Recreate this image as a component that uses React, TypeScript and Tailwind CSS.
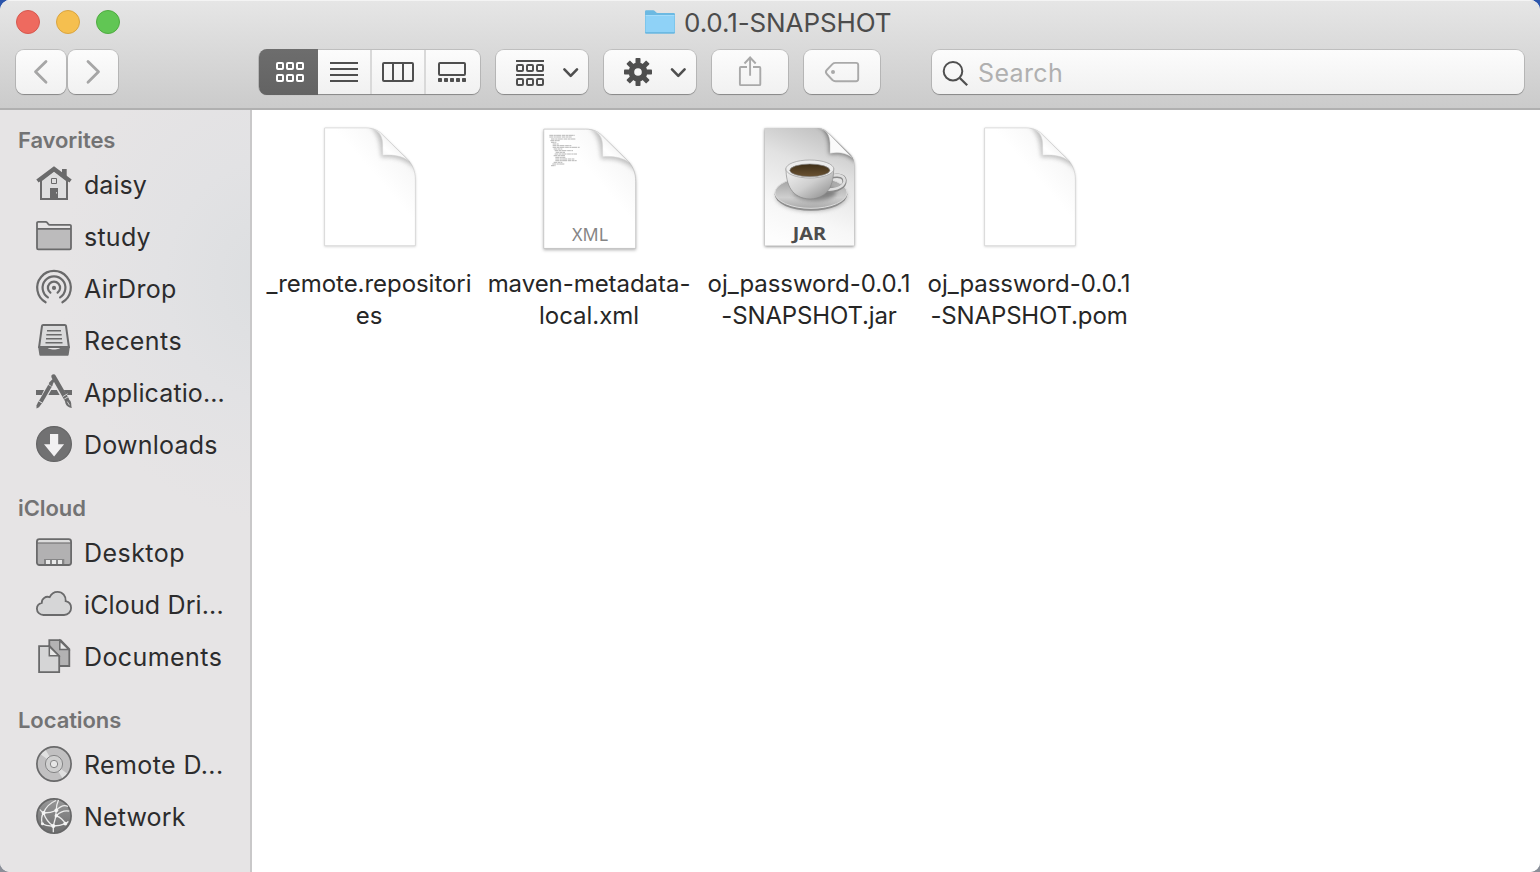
import type { ReactNode } from "react";

const STROKE = "#6a6a6b";

function SideIcon({ children }: { children: ReactNode }) {
  return (
    <svg width="36" height="36" viewBox="0 0 36 36" fill="none" className="mb-0.5 shrink-0 overflow-visible">
      {children}
    </svg>
  );
}

const HomeIcon = (
  <SideIcon>
    <path d="M5 14.5V33H31V14.5L18 4.5Z" fill="#dededf" stroke={STROKE} strokeWidth="2" />
    <path d="M26 3h4.7v9L26 8.5Z" fill={STROKE} />
    <path d="M18 .2 .3 13.6 2.6 16.400 18 5.300 33.400 16.400l2.300-2.800Z" fill={STROKE} />
    <path d="M15.500 12.500h5v5h-5z" stroke={STROKE} strokeWidth="1" />
    <path d="M14 22h8v11h-8z" fill={STROKE} />
    <path d="M20.500 26v1.600" stroke="#ddd" strokeWidth=".8" />
  </SideIcon>
);

const FolderIcon = (
  <SideIcon>
    <path d="M1 10.5h34V30a1.300 1.300 0 0 1-1.300 1.300H2.300A1.300 1.300 0 0 1 1 30Z" fill="#bcbbbc" />
    <path d="M1 30V5a1.200 1.200 0 0 1 1.200-1.200h7.300c.9 0 1.300.3 1.800 1l.9 1.300c.4.600.8.800 1.600.800h20A1.200 1.200 0 0 1 35 8.100V30a1.300 1.300 0 0 1-1.300 1.300H2.300A1.300 1.300 0 0 1 1 30ZM1 10.900h34" stroke={STROKE} strokeWidth="1.800" />
  </SideIcon>
);

const AirDropIcon = (
  <SideIcon>
    <g stroke={STROKE} strokeWidth="2.200" strokeLinecap="round">
      <path d="M9.600 32.300a16.800 16.800 0 1 1 16.800 0" />
      <path d="M11.900 27.400a11.400 11.400 0 1 1 12.200 0" />
      <path d="M14.400 22.700a6.100 6.100 0 1 1 7.200 0" />
    </g>
    <circle cx="18" cy="17.900" r="2.100" fill={STROKE} />
  </SideIcon>
);

const RecentsIcon = (
  <SideIcon>
    <path d="M7.200 2.900h21.600c.7 0 1.100.4 1.200 1l2.900 21.200H3.100L6 3.900C6.100 3.300 6.500 2.900 7.200 2.900Z" fill="#dadadb" stroke={STROKE} strokeWidth="2" />
    <path d="M11 8.700h14M10.300 12.700h15.400M10 16.700h16M9.500 20.700h17" stroke={STROKE} strokeWidth="1.600" />
    <path d="M2.600 24.200h7.900c.6 4.400 14.400 4.400 15 0h7.900l.3 1.600-1 6.600c-.1.900-.5 1.300-1.300 1.300H4.600c-.8 0-1.200-.4-1.300-1.300l-1-6.600Z" fill="#6f6f70" />
  </SideIcon>
);

const ApplicationsIcon = (
  <SideIcon>
    <path d="M0 16h8l-2.300 5H0zM15.200 16h5.600l2.800 5H12.400zM27.800 16H36v5h-5.600z" fill="#6b6b6c" />
    <path d="M15.200 9.800 4.600 28" stroke="#6b6b6c" strokeWidth="4" />
    <path d="M14.900 6.800 16.800 5l2 1.300-2.500 4.600-3.500-2z" fill="#6b6b6c" />
    <path d="m2.400 27.200 3.600 2-3 4-2.500 1.400v-3z" fill="#6b6b6c" />
    <path d="m12 10.300 3.600 2.200M2.200 26.600l4.200 2.400" stroke="#e0e0e1" strokeWidth=".8" />
    <path d="M17.600 2.600 31 26" stroke="#6b6b6c" strokeWidth="4.600" strokeLinecap="round" />
    <path d="m26.900 22.600 4.700-2.800M28.300 25l4.700-2.700" stroke="#e0e0e1" strokeWidth=".9" />
    <path d="M29.300 26.500c2-1.700 4.600-1 5.500 1.300.8 2 .2 3.800 1 6.300-2.900-.4-5.500-2-6.300-4.500-.4-1.100-.4-2.200-.2-3.100Z" fill="#6b6b6c" />
    <path d="m31.300 27.600 2.200 3.700" stroke="#d8d8d8" strokeWidth=".9" />
  </SideIcon>
);

const DownloadsIcon = (
  <SideIcon>
    <circle cx="18" cy="18" r="17.400" fill="#717172" stroke="#646465" strokeWidth="1.200" />
    <path d="M14 8h8.200v10.200h5.900L18.100 30.600 8 18.200h6Z" fill="#f2f1f2" />
  </SideIcon>
);

const DesktopIcon = (
  <SideIcon>
    <rect x=".9" y="5.200" width="34.200" height="25.800" rx="2.500" fill="#b2b1b2" />
    <path d="M1.500 5.800h33v3h-33z" fill="#dcdcdc" />
    <path d="M1 9h34" stroke={STROKE} strokeWidth="1.200" />
    <path d="M8 25h20.300v6H8z" fill="#858586" />
    <path d="M10 26h4v4.300h-4zM16 26h4v4.300h-4zM22 26h4v4.300h-4z" fill="#e9e9e9" />
    <rect x=".9" y="5.200" width="34.200" height="25.800" rx="2.500" stroke={STROKE} strokeWidth="1.800" />
  </SideIcon>
);

const CloudIcon = (
  <SideIcon>
    <path d="M7.500 29C3.800 29 .9 26.300.9 22.800c0-3 2-5.300 4.900-6C5.500 12.800 9.700 9.600 13.700 11.200 15.200 7.900 18 5.900 21.600 5.900c5 0 8.600 4.300 8.100 9.300 3.200.7 5.400 3.400 5.400 6.700 0 4-3 7.100-7 7.100Z" fill="#d6d6d7" stroke={STROKE} strokeWidth="1.800" />
  </SideIcon>
);

const DocumentsIcon = (
  <SideIcon>
    <path d="M13.300 2.100h11.300l8.700 9V28H13.300Z" fill="#b3b2b3" stroke={STROKE} strokeWidth="1.800" />
    <path d="M23.800 2.600v8.900h9z" fill="#e8e8e8" stroke={STROKE} strokeWidth="1.500" />
    <path d="M3.100 8.100h10.600l9.500 10V34.200H3.100Z" fill="#d5d5d6" stroke={STROKE} strokeWidth="1.800" />
    <path d="M13.300 8.500v9.300h9.500z" fill="#e8e8e8" stroke={STROKE} strokeWidth="1.500" />
  </SideIcon>
);

const DiscIcon = (
  <SideIcon>
    <circle cx="18" cy="18" r="17.200" fill="#c1c0c1" />
    <path d="M18 18 4.500 8.300 9.400 3.600ZM18 18l13.500 9.700-4.900 4.700Z" fill="#e0e0e0" />
    <circle cx="18" cy="18" r="17.100" stroke="#6a6a6b" strokeWidth="1.700" />
    <circle cx="18" cy="18" r="8.600" fill="#d0d0d0" stroke="#858586" strokeWidth="1" />
    <circle cx="18" cy="18" r="3.700" fill="#e6e6e6" stroke="#858586" strokeWidth="1" />
  </SideIcon>
);

const NetworkIcon = (
  <SideIcon>
    <defs>
      <linearGradient id="globe" x1="0" y1="0" x2="0" y2="1">
        <stop offset="0" stopColor="#989899" />
        <stop offset="1" stopColor="#6c6c6d" />
      </linearGradient>
    </defs>
    <circle cx="18" cy="18" r="17.100" fill="url(#globe)" stroke="#666667" strokeWidth="1.700" />
    <g stroke="#ececec" strokeWidth="1.300">
      <path d="M7.600 15C9.500 9.500 14 5 20 2.500M4 11.500c1 1.500 2 2.800 3.600 3.500M7.600 15c-2 2.500-2.600 5-1.600 10.500M22.500 2c-1.600 3.500-2.200 6.500-2.200 10M7.600 15c4 0 8.700-.7 12.700-2.500C24 8.500 28 6.500 32 8.500M20.300 17.700c3.500-3.500 8-5.500 13-4.500M20.300 12.500c-.2 5-1.200 10-3 15.500M20.300 17.700c4 1.800 7 4.300 9 8M7.600 15c1.800 5.500 5 10 9.700 13M5.500 25.500c3.500 2 7.500 2.700 11.800 2.500 4.500 0 8.500-.8 12-2.400 1.300-.6 2.300-1.400 3-2.300M17.300 28v6.300" />
    </g>
    <g fill="#f4f4f4">
      <circle cx="7.600" cy="15" r="2" />
      <circle cx="20.300" cy="12.300" r="1.900" />
      <circle cx="20.300" cy="17.700" r="1.700" />
      <circle cx="17.300" cy="28" r="2" />
      <circle cx="29.300" cy="25.600" r="1.900" />
      <circle cx="6.500" cy="25.800" r="1.500" />
    </g>
  </SideIcon>
);

type Item = { label: string; icon: ReactNode; spacing: string };
const sections: { title: string; items: Item[] }[] = [
  {
    title: "Favorites",
    items: [
      { label: "daisy", icon: HomeIcon, spacing: "tracking-[0.05px]" },
      { label: "study", icon: FolderIcon, spacing: "tracking-[0.25px]" },
      { label: "AirDrop", icon: AirDropIcon, spacing: "tracking-[0.28px]" },
      { label: "Recents", icon: RecentsIcon, spacing: "tracking-[0.42px]" },
      { label: "Applicatio...", icon: ApplicationsIcon, spacing: "tracking-[0.12px]" },
      { label: "Downloads", icon: DownloadsIcon, spacing: "tracking-[0.22px]" },
    ],
  },
  {
    title: "iCloud",
    items: [
      { label: "Desktop", icon: DesktopIcon, spacing: "tracking-[0.45px]" },
      { label: "iCloud Dri...", icon: CloudIcon, spacing: "tracking-[0.14px]" },
      { label: "Documents", icon: DocumentsIcon, spacing: "tracking-[0.42px]" },
    ],
  },
  {
    title: "Locations",
    items: [
      { label: "Remote D...", icon: DiscIcon, spacing: "tracking-[0.38px]" },
      { label: "Network", icon: NetworkIcon, spacing: "tracking-[0.16px]" },
    ],
  },
];

function Sidebar() {
  return (
    <nav className="flex w-[252px] shrink-0 flex-col gap-[18px] border-r-2 border-[#c9c8c9] bg-[#e6e4e5] bg-[radial-gradient(ellipse_210px_240px_at_270px_170px,#dcdee0_0%,#e2e2e4_50%,rgba(230,228,229,0)_100%)] pt-[11px]">
      {sections.map((s) => (
        <section key={s.title}>
          <h2 className="flex h-[38px] items-center pl-[18px] text-[22px] font-semibold tracking-[-0.08px] text-[#737374]">{s.title}</h2>
          <ul>
            {s.items.map((it) => (
              <li key={it.label} className="flex h-[52px] items-center gap-3 pl-9">
                {it.icon}
                <span className={`pt-0.5 text-[25px] whitespace-nowrap text-[#2c2c2d] ${it.spacing}`}>{it.label}</span>
              </li>
            ))}
          </ul>
        </section>
      ))}
    </nav>
  );
}

const FACE =
  "rounded-[8px] bg-linear-to-b from-[#fcfcfc] to-[#f1f1f1] shadow-[0_0_0_1px_rgba(0,0,0,0.12),0_1px_1px_rgba(0,0,0,0.25)]";

const squares = (x: number, y: number) =>
  [0, 10, 20].map((d) => <rect key={`${d}-${y}`} x={x + d + 1} y={y + 1} width="6" height="6" rx="1" />);

const GEAR_ANGLES = [0, 45, 90, 135, 180, 225, 270, 315];

function Toolbar() {
  return (
    <div className="flex h-11 text-[#4f4f4f]">
      <button className={`${FACE} ml-4 w-[50px]`}>
        <svg width="50" height="44" viewBox="16 50 50 44" fill="none" stroke="#a6a6a6" strokeWidth="2.800" strokeLinecap="round" strokeLinejoin="round">
          <path d="M46 61.500 35.500 71.800 46 82.200" />
        </svg>
      </button>
      <button className={`${FACE} ml-0.5 w-[50px]`}>
        <svg width="50" height="44" viewBox="68 50 50 44" fill="none" stroke="#a6a6a6" strokeWidth="2.800" strokeLinecap="round" strokeLinejoin="round">
          <path d="M88 61.500 98.500 71.800 88 82.200" />
        </svg>
      </button>
      <div className={`${FACE} ml-[141px] flex w-[221px] divide-x-2 divide-[#d9d9d9]`}>
        <button className="-my-px w-[59px] rounded-l-[8px] border-0 bg-linear-to-b from-[#6d6d6d] to-[#636363]">
          <svg width="59" height="46" viewBox="259 49 59 46" fill="none" stroke="#fff" strokeWidth="2">
            {squares(276, 62)}
            {squares(276, 74)}
          </svg>
        </button>
        <button className="w-[54px]">
          <svg width="52" height="44" viewBox="318 50 52 44" stroke="currentColor" strokeWidth="2">
            <path d="M330 63h28M330 69h28M330 75h28M330 81h28" />
          </svg>
        </button>
        <button className="w-[54px]">
          <svg width="52" height="44" viewBox="372 50 52 44" fill="none" stroke="currentColor" strokeWidth="2">
            <rect x="383" y="63" width="30" height="18" rx="1" />
            <path d="M393 63v18M403 63v18" />
          </svg>
        </button>
        <button className="w-[54px]">
          <svg width="54" height="44" viewBox="426 50 54 44" fill="none" stroke="currentColor" strokeWidth="2">
            <rect x="439" y="63" width="26" height="12" rx="1" />
            {[438, 444, 450, 456, 462].map((x) => (
              <rect key={x} x={x} y="78" width="4" height="4" rx=".7" fill="currentColor" stroke="none" />
            ))}
          </svg>
        </button>
      </div>
      <button className={`${FACE} ml-4 w-[92px]`}>
        <svg width="92" height="44" viewBox="496 50 92 44" fill="none" stroke="currentColor" strokeWidth="2">
          <path d="M516 61h28M516 75h28" />
          {squares(516, 64)}
          {squares(516, 78)}
          <path d="m564.400 69.400 6.300 6.400 6.300-6.400" strokeWidth="2.600" strokeLinecap="round" strokeLinejoin="round" />
        </svg>
      </button>
      <button className={`${FACE} ml-4 w-[92px]`}>
        <svg width="92" height="44" viewBox="604 50 92 44" fill="none" stroke="currentColor">
          <circle cx="638" cy="72" r="6.600" strokeWidth="5.600" />
          {GEAR_ANGLES.map((a) => (
            <path key={a} d="M635.500 64.500v-5.700a.8.800 0 0 1 .8-.8h3.400a.8.800 0 0 1 .8.800v5.700Z" fill="currentColor" stroke="none" transform={`rotate(${a} 638 72)`} />
          ))}
          <path d="m672 69.400 6.300 6.400 6.300-6.400" strokeWidth="2.600" strokeLinecap="round" strokeLinejoin="round" />
        </svg>
      </button>
      <button className={`${FACE} ml-4 w-[76px]`}>
        <svg width="76" height="44" viewBox="712 50 76 44" fill="none" stroke="#a9a9a9" strokeWidth="1.900">
          <path d="M747 67h-6.200a.9.900 0 0 0-.9.900V84.200a.9.900 0 0 0 .9.900h18.600a.9.900 0 0 0 .9-.9V67.900a.9.900 0 0 0-.9-.9H753M750.100 75.800V58M744.500 63.500l5.600-6 5.600 6" />
        </svg>
      </button>
      <button className={`${FACE} ml-4 w-[76px]`}>
        <svg width="76" height="44" viewBox="804 50 76 44" fill="none" stroke="#a9a9a9" strokeWidth="1.900">
          <path d="M835.500 62.900H856a2.200 2.200 0 0 1 2.200 2.200V79a2.200 2.200 0 0 1-2.200 2.200H835.500c-1.200 0-2.200-.4-3.100-1.200l-5.600-6c-1.300-1.400-1.300-2.600 0-4l5.600-5.900c.9-.8 1.900-1.200 3.100-1.200Z" />
          <circle cx="833" cy="72" r="2" fill="#a9a9a9" stroke="none" />
        </svg>
      </button>
      <label className={`${FACE} ml-[52px] flex w-[592px] items-center`}>
        <svg width="46" height="44" viewBox="932 50 46 44" fill="none" stroke="#4f4f4f" strokeWidth="2">
          <circle cx="953" cy="71.200" r="9.300" />
          <path d="m959.800 78 7.400 7.200" strokeWidth="2.300" />
        </svg>
        <span className="pt-0.5 text-[25px] leading-[42px] tracking-[0.35px] text-[#b0b0b0]">Search</span>
      </label>
    </div>
  );
}

function Defs() {
  return (
    <svg width="0" height="0" className="absolute">
      <defs>
        <linearGradient id="paper" x1="1" y1="0" x2=".45" y2=".62">
          <stop offset=".16" stopColor="#cfcfcf" />
          <stop offset=".4" stopColor="#efefef" />
          <stop offset=".72" stopColor="#fff" />
        </linearGradient>
        <linearGradient id="jarPaper" x1=".7" y1="0" x2=".4" y2="1">
          <stop offset="0" stopColor="#bebebe" />
          <stop offset=".35" stopColor="#e2e2e2" />
          <stop offset=".75" stopColor="#f7f7f7" />
          <stop offset="1" stopColor="#fdfdfd" />
        </linearGradient>
        <linearGradient id="curl" x1="0" y1="1" x2=".6" y2=".4">
          <stop offset="0" stopColor="#ececec" />
          <stop offset=".6" stopColor="#fff" />
          <stop offset="1" stopColor="#f2f2f2" />
        </linearGradient>
        <linearGradient id="cup" x1="0" y1="0" x2="1" y2="1">
          <stop offset="0" stopColor="#f4f4f4" />
          <stop offset=".5" stopColor="#cfcfcf" />
          <stop offset="1" stopColor="#858585" />
        </linearGradient>
        <linearGradient id="saucer" x1="0" y1="0" x2="0" y2="1">
          <stop offset="0" stopColor="#9a9a9a" />
          <stop offset=".65" stopColor="#cfcfcf" />
          <stop offset="1" stopColor="#a9a9a9" />
        </linearGradient>
        <linearGradient id="coffee" x1="0" y1="0" x2="0" y2="1">
          <stop offset="0" stopColor="#3f2f17" />
          <stop offset="1" stopColor="#6a5232" />
        </linearGradient>
        <filter id="soft" x="-30%" y="-30%" width="160%" height="160%">
          <feGaussianBlur stdDeviation="7" />
        </filter>
      </defs>
    </svg>
  );
}

const PAGE = "M194 39H318C340 39 354 46 368 60L440 130C456 146 466 166 466 195V392H194Z";
const CURL = "M340 43C360 50 368 68 368 88V121C396 118 424 122 446 137L368 60C360 51 350 45 340 43Z";

function FileIcon({ kind }: { kind: "blank" | "xml" | "jar" }) {
  if (kind === "jar") {
    return (
      <svg width="220" height="153" viewBox="-3 0 660 459">
        <clipPath id="jarClip">
          <path d="M194 39H352C368 39 376 46 388 57L446 114C457 124 463 134 463 150V392H194Z" />
        </clipPath>
        <path d="M194 39H352C368 39 376 46 388 57L446 114C457 124 463 134 463 150V392H194Z" fill="#bbb" className="drop-shadow-[0_3px_5px_rgba(0,0,0,0.45)]" />
        <g clipPath="url(#jarClip)">
          <path d="M190 35H470V400H190Z" fill="url(#jarPaper)" />
          <path d="M350 30C385 45 388 80 388 118C420 112 450 120 470 145V90L400 30Z" fill="#555" filter="url(#soft)" opacity=".75" />
        </g>
        <path d="M358 40C382 46 388 62 390 84V115C415 111 438 113 457 128L388 58C378 48 370 42 358 40Z" fill="#fafafa" stroke="#c4c4c4" strokeWidth="1.500" />
        <ellipse cx="334" cy="244" rx="106" ry="44" fill="#777" filter="url(#soft)" opacity=".55" />
        <ellipse cx="333" cy="238" rx="109" ry="49" fill="#8d8d8d" />
        <ellipse cx="333" cy="233" rx="108" ry="47" fill="url(#saucer)" stroke="#dcdcdc" strokeWidth="3" />
        <ellipse cx="345" cy="232" rx="64" ry="25" fill="#6f6f6f" filter="url(#soft)" opacity=".8" />
        <path d="M388 187C416 177 437 184 433 203C429 221 399 229 374 225" fill="none" stroke="#8a8a8a" strokeWidth="13" />
        <path d="M388 185C416 175 437 182 433 201C429 218 399 226 374 223" fill="none" stroke="#dedede" strokeWidth="8" />
        <path d="M258 160C258 208 274 250 330 252C386 250 401 208 401 160Z" fill="url(#cup)" stroke="#8a8a8a" strokeWidth="2" />
        <ellipse cx="329.500" cy="162" rx="72" ry="27" fill="#ececec" stroke="#999" strokeWidth="2" />
        <ellipse cx="329.500" cy="166" rx="60" ry="19" fill="url(#coffee)" stroke="#888" strokeWidth="2" />
        <text x="278" y="376" fontSize="55" fontWeight="700" fill="#4d4d4d" className="font-['Noto_Sans',sans-serif]" textLength="100" lengthAdjust="spacingAndGlyphs">
          JAR
        </text>
      </svg>
    );
  }
  const xml = kind === "xml";
  return (
    <svg width="220" height="153" viewBox="-3 0 660 459">
      <g transform={xml ? "translate(-5 3) scale(1.013)" : undefined}>
        <path d={PAGE} fill="#fff" stroke={xml ? "#c2c2c2" : "#d4d4d4"} strokeWidth="2.500" className={xml ? "drop-shadow-[0_4px_4px_rgba(0,0,0,0.3)]" : "drop-shadow-[0_2px_3px_rgba(0,0,0,0.18)]"} />
        <clipPath id={`clip-${kind}`}>
          <path d={PAGE} />
        </clipPath>
        <g clipPath={`url(#clip-${kind})`}>
          <path d="M195 40H465V391H195Z" fill="url(#paper)" opacity=".4" />
          <path d="M328 34C358 55 360 90 364 128C400 124 440 132 475 170V90L400 34Z" fill="#777" filter="url(#soft)" opacity=".42" />
        </g>
        <path d={CURL} fill="url(#curl)" stroke="#d6d6d6" strokeWidth="1.500" />
      </g>
      {xml && (
        <>
          <g stroke="#a2a2a2" strokeWidth="2.300" strokeDasharray="11 1.500 7 1 15 2">
            <path d="M208 61h77M208 66h67M213 72h74M211 77h28M213 82h16M218 87h18M218 92h56M218 97h81M221 102h26M224 107h55M227 112h28M224 117h67M221 122h34M226 127h30M226 132h58M226 137h64M221 142h26M217 147h38M213 152h14" />
          </g>
          <text x="276" y="378" fontSize="53" fill="#858585" className="font-['Noto_Sans',sans-serif]" textLength="108" lengthAdjust="spacingAndGlyphs">
            XML
          </text>
        </>
      )}
    </svg>
  );
}

const files: { kind: "blank" | "xml" | "jar"; lines: string[] }[] = [
  { kind: "blank", lines: ["_remote.repositori", "es"] },
  { kind: "xml", lines: ["maven-metadata-", "local.xml"] },
  { kind: "jar", lines: ["oj_password-0.0.1", "-SNAPSHOT.jar"] },
  { kind: "blank", lines: ["oj_password-0.0.1", "-SNAPSHOT.pom"] },
];

export default function App() {
  return (
    <div className="h-[872px] w-[1540px] overflow-hidden bg-linear-to-b from-[#2b55ab] to-[#8b8f98] font-[Inter,sans-serif]">
      <Defs />
      <div className="flex h-full flex-col overflow-hidden rounded-[10px] bg-white">
        <header className="h-[110px] shrink-0 border-b-2 border-[#b0b0b0] bg-linear-to-b from-[#e6e6e6] to-[#cbcbcb] shadow-[inset_0_1px_0_#f4f4f4]">
          <div className="flex h-[50px] items-start">
            <div className="flex gap-4 pt-[10px] pl-4">
              <i className="size-6 rounded-full border border-[#d6584f] bg-[#ee6a5f]" />
              <i className="size-6 rounded-full border border-[#d9a440] bg-[#f5bf4f]" />
              <i className="size-6 rounded-full border border-[#4fab41] bg-[#61c654]" />
            </div>
            <h1 className="ml-[524px] flex h-[46px] items-center gap-2 text-[26px] leading-[38px] whitespace-nowrap text-[#4c4c4c]">
              <svg width="32" height="26" viewBox="644 9 32 26" className="mb-0.5">
                <path d="M645 32V11.500A1.200 1.200 0 0 1 646.200 10.300H653.500C655 10.300 655.500 13 657.500 13H673.800A1.200 1.200 0 0 1 675 14.200V32.500A1.200 1.200 0 0 1 673.800 33.700H646.200A1.200 1.200 0 0 1 645 32.500Z" fill="#6cb9e2" />
                <path d="M645.500 16H674.500V32H645.500Z" fill="#8fd2f7" />
                <path d="M645.500 15.500H674.500" stroke="#a6dcfa" />
              </svg>
              <span className="tracking-[-0.1px]">0.0.1-SNAPSHOT</span>
            </h1>
          </div>
          <Toolbar />
        </header>
        <div className="flex min-h-0 flex-1">
          <Sidebar />
          <main className="flex flex-1 items-start bg-white pt-[5px] pl-[7px]">
            {files.map((f, i) => (
              <figure key={i} className="flex w-[220px] flex-col items-center">
                <FileIcon kind={f.kind} />
                <figcaption className="flex flex-col items-center text-[24px] leading-8 tracking-[-0.05px] whitespace-nowrap text-[#262626]">
                  {f.lines.map((l) => (
                    <span key={l} className={l.startsWith("-") ? "tracking-[-0.15px]" : ""}>
                      {l}
                    </span>
                  ))}
                </figcaption>
              </figure>
            ))}
          </main>
        </div>
      </div>
    </div>
  );
}
